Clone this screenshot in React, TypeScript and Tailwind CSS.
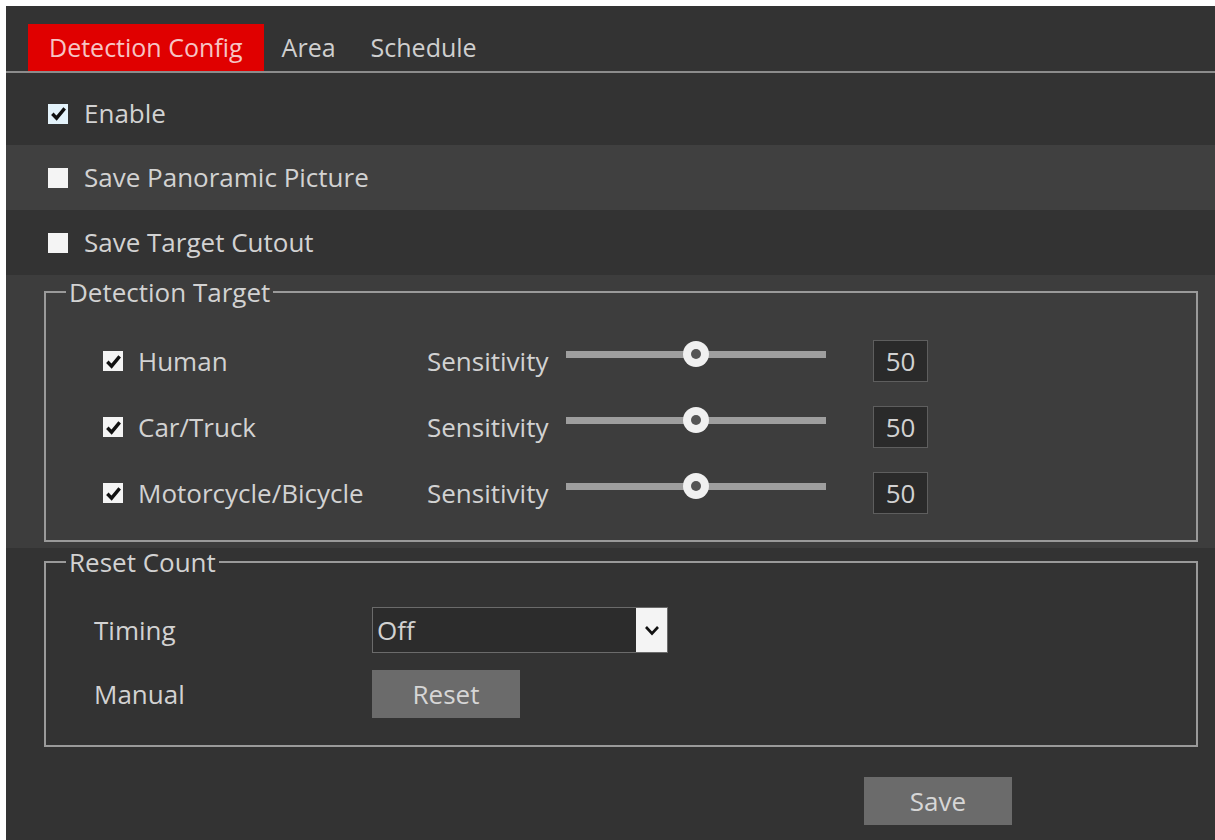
import { Fragment } from "react";

const targets = [
  { id: "human", label: "Human", value: 50 },
  { id: "car", label: "Car/Truck", value: 50 },
  { id: "moto", label: "Motorcycle/Bicycle", value: 50 },
];

function CheckBox({ checked, tint }: { checked?: boolean; tint?: boolean }) {
  return (
    <span
      className={`w-[20px] h-[20px] flex items-center justify-center shrink-0 ${
        tint ? "bg-[#e4f3fb]" : "bg-[#f4f4f4]"
      }`}
    >
      {checked && (
        <svg width="17" height="17" viewBox="0 0 16 16">
          <path d="M2.2 8.2 L6.2 12.4 L13.8 3.2" fill="none" stroke="#111" strokeWidth="3.2" />
        </svg>
      )}
    </span>
  );
}

function Slider({ value }: { value: number }) {
  return (
    <div className="relative w-[260px] h-[26px] flex items-center">
      <div className="w-full h-[7px] bg-[#9e9e9e]" />
      {/* thumb */}
      <div
        className="absolute top-0 w-[26px] h-[26px] rounded-full bg-[#f0f0f0] flex items-center justify-center"
        style={{ left: `calc(${value}% - 13px)` }}
      >
        <div className="w-[10px] h-[10px] rounded-full bg-[#555]" />
      </div>
    </div>
  );
}

export default function App() {
  return (
    <div
      className="bg-white pt-[6px] pl-[6px] w-[1215px] h-[840px] overflow-hidden"
      style={{ fontFamily: '"Open Sans", "Noto Sans", sans-serif' }}
    >
      <div className="bg-[#333333] h-[834px] text-[#d2d2d2] text-[26px]">
        {/* Tabs */}
        <div className="flex items-end pt-[18px] pl-[22px] border-b-2 border-[#8c8c8c] text-[25px]">
          <div className="h-[47px] px-[21px] bg-[#e00000] text-[#f6c4c4] flex items-center">Detection Config</div>
          <div className="h-[47px] pl-[18px] pr-[35px] flex items-center text-[#cfcfcf]">Area</div>
          <div className="h-[47px] flex items-center text-[#cfcfcf]">Schedule</div>
        </div>

        {/* Top options */}
        <div className="mt-[9px] h-[63px] flex items-center gap-[16px] pl-[42px]">
          <CheckBox checked tint />
          <span>Enable</span>
        </div>
        <div className="h-[65px] flex items-center gap-[16px] pl-[42px] bg-[#404040]">
          <CheckBox />
          <span>Save Panoramic Picture</span>
        </div>
        <div className="h-[65px] flex items-center gap-[16px] pl-[42px]">
          <CheckBox />
          <span>Save Target Cutout</span>
        </div>

        {/* Detection Target */}
        <div className="bg-[#3d3d3d] pl-[38px] pr-[17px] pb-[6px]">
          <fieldset className="border-2 border-[#9a9a9a] pb-[26px]">
            <legend className="ml-[20px] px-[3px] leading-[34px]">Detection Target</legend>
            <div className="grid grid-cols-[324px_139px_260px_47px_55px] pl-[57px] pt-[31px] gap-y-[24px] items-center">
              {targets.map((t) => (
                <Fragment key={t.id}>
                  <div className="flex items-center gap-[15px]">
                    <CheckBox checked />
                    <span>{t.label}</span>
                  </div>
                  <span>Sensitivity</span>
                  <div className="-mt-[14px]">
                    <Slider value={t.value} />
                  </div>
                  <span />
                  <div className="h-[42px] border border-[#5e5e5e] bg-[#2a2a2a] flex items-center justify-center">
                    {t.value}
                  </div>
                </Fragment>
              ))}
            </div>
          </fieldset>
        </div>

        {/* Reset Count */}
        <div className="pl-[38px] pr-[17px]">
          <fieldset className="border-2 border-[#9a9a9a] pb-[27px]">
            <legend className="ml-[20px] px-[3px] leading-[28px]">Reset Count</legend>
            <div className="grid grid-cols-[278px_auto] pl-[48px] pt-[31px] gap-y-[17px] items-center">
              <span>Timing</span>
              <div className="w-[296px] h-[46px] border border-[#6b6b6b] bg-[#2c2c2c] flex items-stretch">
                <span className="flex-1 flex items-center pl-[4px]">Off</span>
                <span className="w-[31px] bg-[#f4f4f4] flex items-center justify-center">
                  <svg width="18" height="18" viewBox="0 0 18 18">
                    <path d="M3 6 L9 12.5 L15 6" fill="none" stroke="#111" strokeWidth="2.6" />
                  </svg>
                </span>
              </div>
              <span>Manual</span>
              <button className="w-[148px] h-[48px] bg-[#6b6b6b] text-[#d6d6d6]">Reset</button>
            </div>
          </fieldset>
        </div>

        {/* Save */}
        <div className="pt-[30px] pl-[858px]">
          <button className="w-[148px] h-[48px] bg-[#6b6b6b] text-[#d6d6d6]">Save</button>
        </div>
      </div>
    </div>
  );
}
